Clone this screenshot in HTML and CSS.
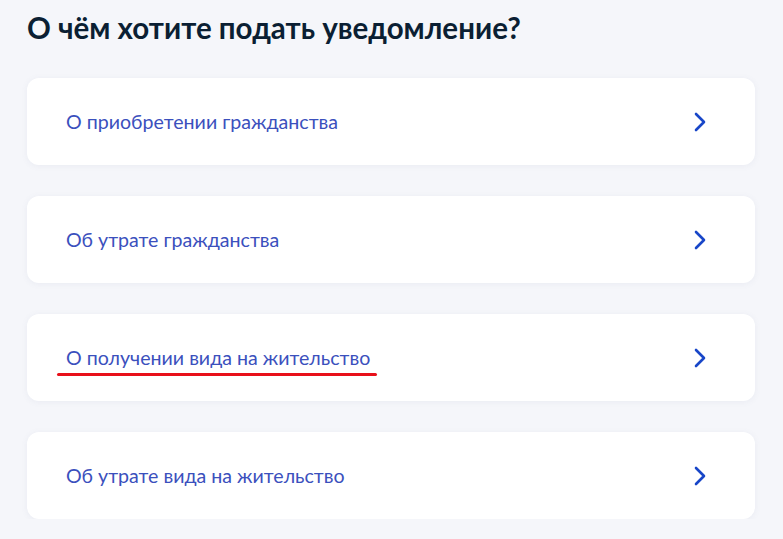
FILE: index.html
```html
<!DOCTYPE html>
<html lang="ru">
<head>
    <meta charset="UTF-8">
    <meta name="viewport" content="width=device-width, initial-scale=1.0">
    <title>Уведомление</title>
    <link rel="stylesheet" href="styles.css">
</head>
<body>
    <h2 class="title">О чём хотите подать уведомление?</h2>
    <div class="list">
        <a class="item" href="#">
            <span class="label">О приобретении гражданства</span>
            <svg class="arrow" viewBox="0 0 14 20" width="14" height="20"><path d="M3 2l8 8-8 8" fill="none" stroke="currentColor" stroke-width="2.6" stroke-linecap="round" stroke-linejoin="round"/></svg>
        </a>
        <a class="item" href="#">
            <span class="label">Об утрате гражданства</span>
            <svg class="arrow" viewBox="0 0 14 20" width="14" height="20"><path d="M3 2l8 8-8 8" fill="none" stroke="currentColor" stroke-width="2.6" stroke-linecap="round" stroke-linejoin="round"/></svg>
        </a>
        <a class="item" href="#">
            <span class="label marked">О получении вида на жительство</span>
            <svg class="arrow" viewBox="0 0 14 20" width="14" height="20"><path d="M3 2l8 8-8 8" fill="none" stroke="currentColor" stroke-width="2.6" stroke-linecap="round" stroke-linejoin="round"/></svg>
        </a>
        <a class="item" href="#">
            <span class="label">Об утрате вида на жительство</span>
            <svg class="arrow" viewBox="0 0 14 20" width="14" height="20"><path d="M3 2l8 8-8 8" fill="none" stroke="currentColor" stroke-width="2.6" stroke-linecap="round" stroke-linejoin="round"/></svg>
        </a>
    </div>
</body>
</html>
```

FILE: styles.css
```css
*{
    padding: 0;
    margin: 0;
    box-sizing: border-box;
}
body{
    background-color: #f5f6fa;
    font-family: Lato, "Noto Sans", sans-serif;
    padding: 11px 28px 0 27px;
}
.title{
    font-size: 29.5px;
    font-weight: 700;
    color: #0b1f33;
    line-height: 34px;
    margin-bottom: 33px;
}
.list{
    display: flex;
    flex-direction: column;
    gap: 31px;
}
.item{
    display: flex;
    align-items: center;
    justify-content: space-between;
    height: 87px;
    padding: 0 48px 0 39px;
    background: #fff;
    border-radius: 12px;
    box-shadow: 0 1px 6px rgba(100, 110, 150, 0.08);
    text-decoration: none;
}
.label{
    position: relative;
    font-size: 19.6px;
    color: #3b50bd;
}
.marked::after{
    content: "";
    position: absolute;
    left: -9px;
    right: -7px;
    bottom: -7px;
    height: 3px;
    border-radius: 2px;
    background: #e8101a;
}
.arrow{
    color: #1846c8;
}
```
